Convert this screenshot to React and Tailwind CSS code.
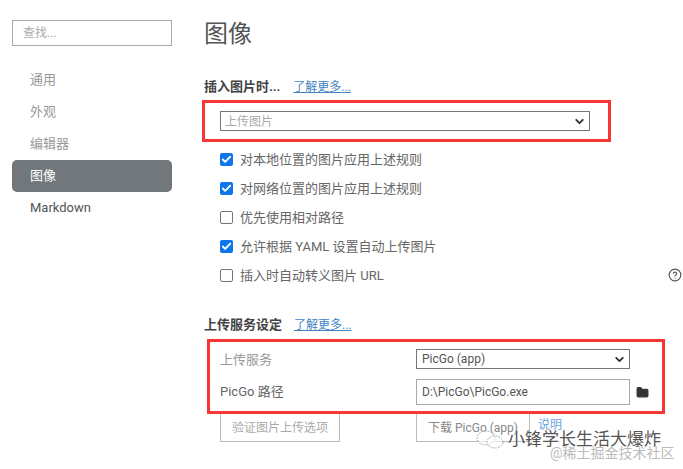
import React from 'react';
import { ChevronDown, Folder, CircleHelp, Check } from 'lucide-react';

const navItems = ['通用', '外观', '编辑器', '图像', 'Markdown'];

const checks = [
  { label: '对本地位置的图片应用上述规则', on: true },
  { label: '对网络位置的图片应用上述规则', on: true },
  { label: '优先使用相对路径', on: false },
  { label: '允许根据 YAML 设置自动上传图片', on: true },
  { label: '插入时自动转义图片 URL', on: false },
];

const CheckRow = ({ label, on }) => (
  <div className="h-[29px] flex items-center gap-[7px]">
    {on ? (
      <span className="w-[13px] h-[13px] rounded-[2px] bg-[#0f75ea] flex items-center justify-center">
        <Check className="w-[11px] h-[11px] text-white" strokeWidth={4} />
      </span>
    ) : (
      <span className="w-[13px] h-[13px] rounded-[2px] border border-[#767676] bg-white" />
    )}
    <span className="text-[13px] text-[#666]">{label}</span>
  </div>
);

const App = () => {
  return (
    <div
      className="relative w-[683px] h-[469px] overflow-hidden bg-white flex"
      style={{ fontFamily: 'Roboto, "Noto Sans CJK SC", sans-serif' }}
    >
      {/* 侧边栏 */}
      <div className="w-[204px] shrink-0 pl-[12px] pt-[20px]">
        <div className="w-[160px] h-[26px] border border-[#aaa] pl-[10px] flex items-center text-[12px] text-[#aaa]">
          查找...
        </div>
        <div className="w-[160px] mt-[18px]">
          {navItems.map((item) => (
            <div
              key={item}
              className={`h-[32px] pl-[18px] flex items-center text-[13px] rounded-[5px] ${
                item === '图像' ? 'bg-[#72777b] text-white' : item === 'Markdown' ? 'text-[#555]' : 'text-[#999]'
              }`}
            >
              {item}
            </div>
          ))}
        </div>
      </div>

      {/* 主内容 */}
      <div className="flex-1 pt-[16px]">
        <h1 className="text-[24px] leading-[36px] text-[#555]">图像</h1>

        <div className="mt-[25px] h-[20px] flex items-center gap-[13px]">
          <span className="text-[13px] font-bold text-[#444]">插入图片时...</span>
          <a className="text-[12px] text-[#4183c4] underline">了解更多...</a>
        </div>

        <div className="mt-[14px] ml-[16px] w-[370px] h-[20px] border border-[#767676] flex items-center justify-between pl-[4px] pr-[3px]">
          <span className="text-[12px] text-[#aaa] pt-[2px]">上传图片</span>
          <ChevronDown className="w-[13px] h-[13px] text-[#333]" strokeWidth={3.5} />
        </div>

        <div className="mt-[14px] ml-[16px] relative">
          {checks.map((c) => (
            <CheckRow key={c.label} label={c.label} on={c.on} />
          ))}
          <CircleHelp className="absolute right-[1px] top-[123px] w-[14px] h-[14px] text-[#555]" strokeWidth={2} />
        </div>

        <div className="mt-[25px] h-[20px] flex items-center gap-[12px]">
          <span className="text-[13px] font-bold text-[#444]">上传服务设定</span>
          <a className="text-[12px] text-[#4183c4] underline">了解更多...</a>
        </div>

        <div className="mt-[14px] ml-[16px] flex flex-col">
          <div className="h-[20px] flex items-center">
            <span className="w-[196px] text-[13px] text-[#999] pt-[2px]">上传服务</span>
            <div className="w-[214px] h-[20px] border border-[#767676] flex items-center justify-between pl-[5px] pr-[3px]">
              <span className="text-[12px] text-[#555]">PicGo (app)</span>
              <ChevronDown className="w-[13px] h-[13px] text-[#333]" strokeWidth={3.5} />
            </div>
          </div>
          <div className="mt-[10px] h-[26px] flex items-center">
            <span className="w-[196px] text-[13px] text-[#666]">PicGo 路径</span>
            <div className="w-[214px] h-[26px] border border-[#aaa] flex items-center pl-[5px] text-[12px] text-[#555]">
              D:\PicGo\PicGo.exe
            </div>
            <Folder className="ml-[6px] w-[13px] h-[13px] text-[#333] fill-[#333]" />
          </div>
          <div className="mt-[8px] h-[29px] flex items-start">
            <div className="w-[120px] h-[29px] border border-[#bbb] flex items-center justify-center text-[12px] text-[#aaa]">
              验证图片上传选项
            </div>
            <div className="ml-[76px] w-[114px] h-[29px] border border-[#bbb] flex items-center justify-center text-[12px] text-[#888]">
              下载 PicGo (app)
            </div>
            <span className="ml-[8px] mt-[6px] text-[12px] leading-[13px] text-[#6aa5e0]">说明</span>
          </div>
        </div>
      </div>

      {/* 红框标注 */}
      <div className="absolute left-[202px] top-[100px] w-[409px] h-[42px] border-[3px] border-[#f93636]" />
      <div className="absolute left-[207px] top-[339px] w-[458px] h-[75px] border-[3px] border-[#f93636]" />

      {/* 水印 */}
      <svg className="absolute left-[473px] top-[430px]" width="34" height="20" viewBox="0 0 34 20" fill="none" stroke="#999" strokeWidth="0.8" strokeDasharray="2 1">
        <ellipse cx="13" cy="8" rx="9" ry="7" fill="#fff" fillOpacity="0.6" />
        <ellipse cx="22" cy="12" rx="8" ry="6" fill="#fff" fillOpacity="0.6" />
      </svg>
      <div className="absolute left-[508px] top-[432px] text-[17px] leading-[14px] text-[#555] whitespace-nowrap">小锋学长生活大爆炸</div>
      <div className="absolute left-[550px] top-[446px] text-[14px] leading-[14px] text-[#bbb] whitespace-nowrap">@稀土掘金技术社区</div>
    </div>
  );
};

export default App;
